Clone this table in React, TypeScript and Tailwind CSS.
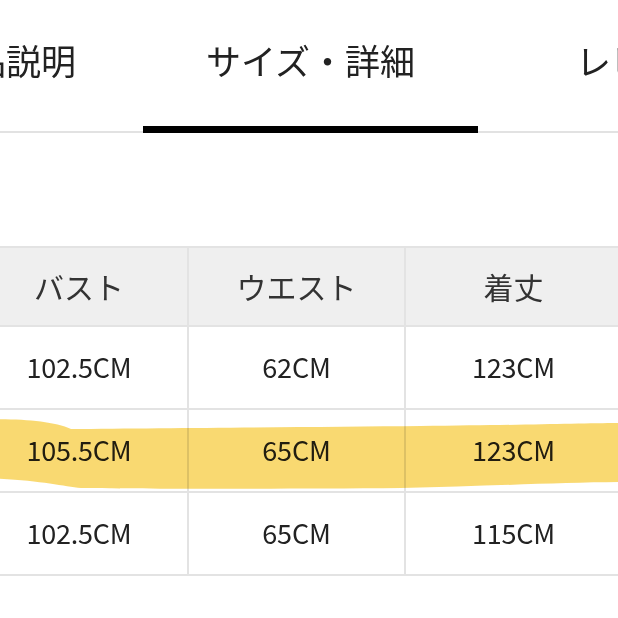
import React from "react"

const rows = [
  ["102.5CM", "62CM", "123CM"],
  ["105.5CM", "65CM", "123CM"],
  ["102.5CM", "65CM", "115CM"],
]

const jp = { fontFamily: "'Noto Sans CJK JP', 'Noto Sans', sans-serif" }

export default function App() {
  return (
    <div className="w-[618px] h-[618px] overflow-hidden bg-white text-[#222]" style={jp}>
      {/* Tabs */}
      <div className="relative flex h-[133px] border-b-2 border-[#e2e2e2]">
        <div className="-ml-[131px] w-[274px] shrink-0 flex items-center justify-center pb-[10px] text-[35px] text-[#222]">
          商品説明
        </div>
        <div className="relative w-[335px] shrink-0 flex items-center justify-center pb-[10px] text-[35px] text-[#222]">
          サイズ・詳細
          <div className="absolute left-0 right-0 -bottom-[2px] h-[7px] bg-black" />
        </div>
        <div className="shrink-0 flex items-center pl-[98px] pb-[10px] text-[35px] text-[#222] whitespace-nowrap">
          レビュー
        </div>
      </div>

      {/* Size table */}
      <div className="relative mt-[113px] -ml-[29px] w-[880px]">
        <div className="grid grid-cols-[216px_215px_215px_216px] gap-[2px] bg-[#e3e3e3] py-[2px]">
          {["バスト", "ウエスト", "着丈", "ヒップ"].map((h) => (
            <div key={h} className="h-[77px] bg-[#efefef] flex items-center justify-center text-[30px] text-[#333]">
              {h}
            </div>
          ))}
          {rows.map((r, i) =>
            [...r, "96CM"].map((c, j) => (
              <div key={i + "-" + j} className="h-[81px] bg-white flex items-center justify-center text-[27px] tracking-[-0.2px] text-[#222]">
                {c}
              </div>
            ))
          )}
        </div>

        {/* marker highlight */}
        <svg
          className="absolute left-0 top-0 mix-blend-multiply pointer-events-none"
          width="880"
          height="340"
          viewBox="0 0 880 340"
        >
          <path
            d="M0 174 C 40 172, 80 174, 100 183 C 200 182, 350 181, 450 180 C 560 179, 620 177, 660 177 L 660 236 C 600 236, 520 240, 430 242 C 300 243, 180 243, 110 242 C 90 240, 60 232, 0 232 Z"
            fill="#f8d665"
            opacity="0.92"
          />
        </svg>
      </div>
    </div>
  )
}
